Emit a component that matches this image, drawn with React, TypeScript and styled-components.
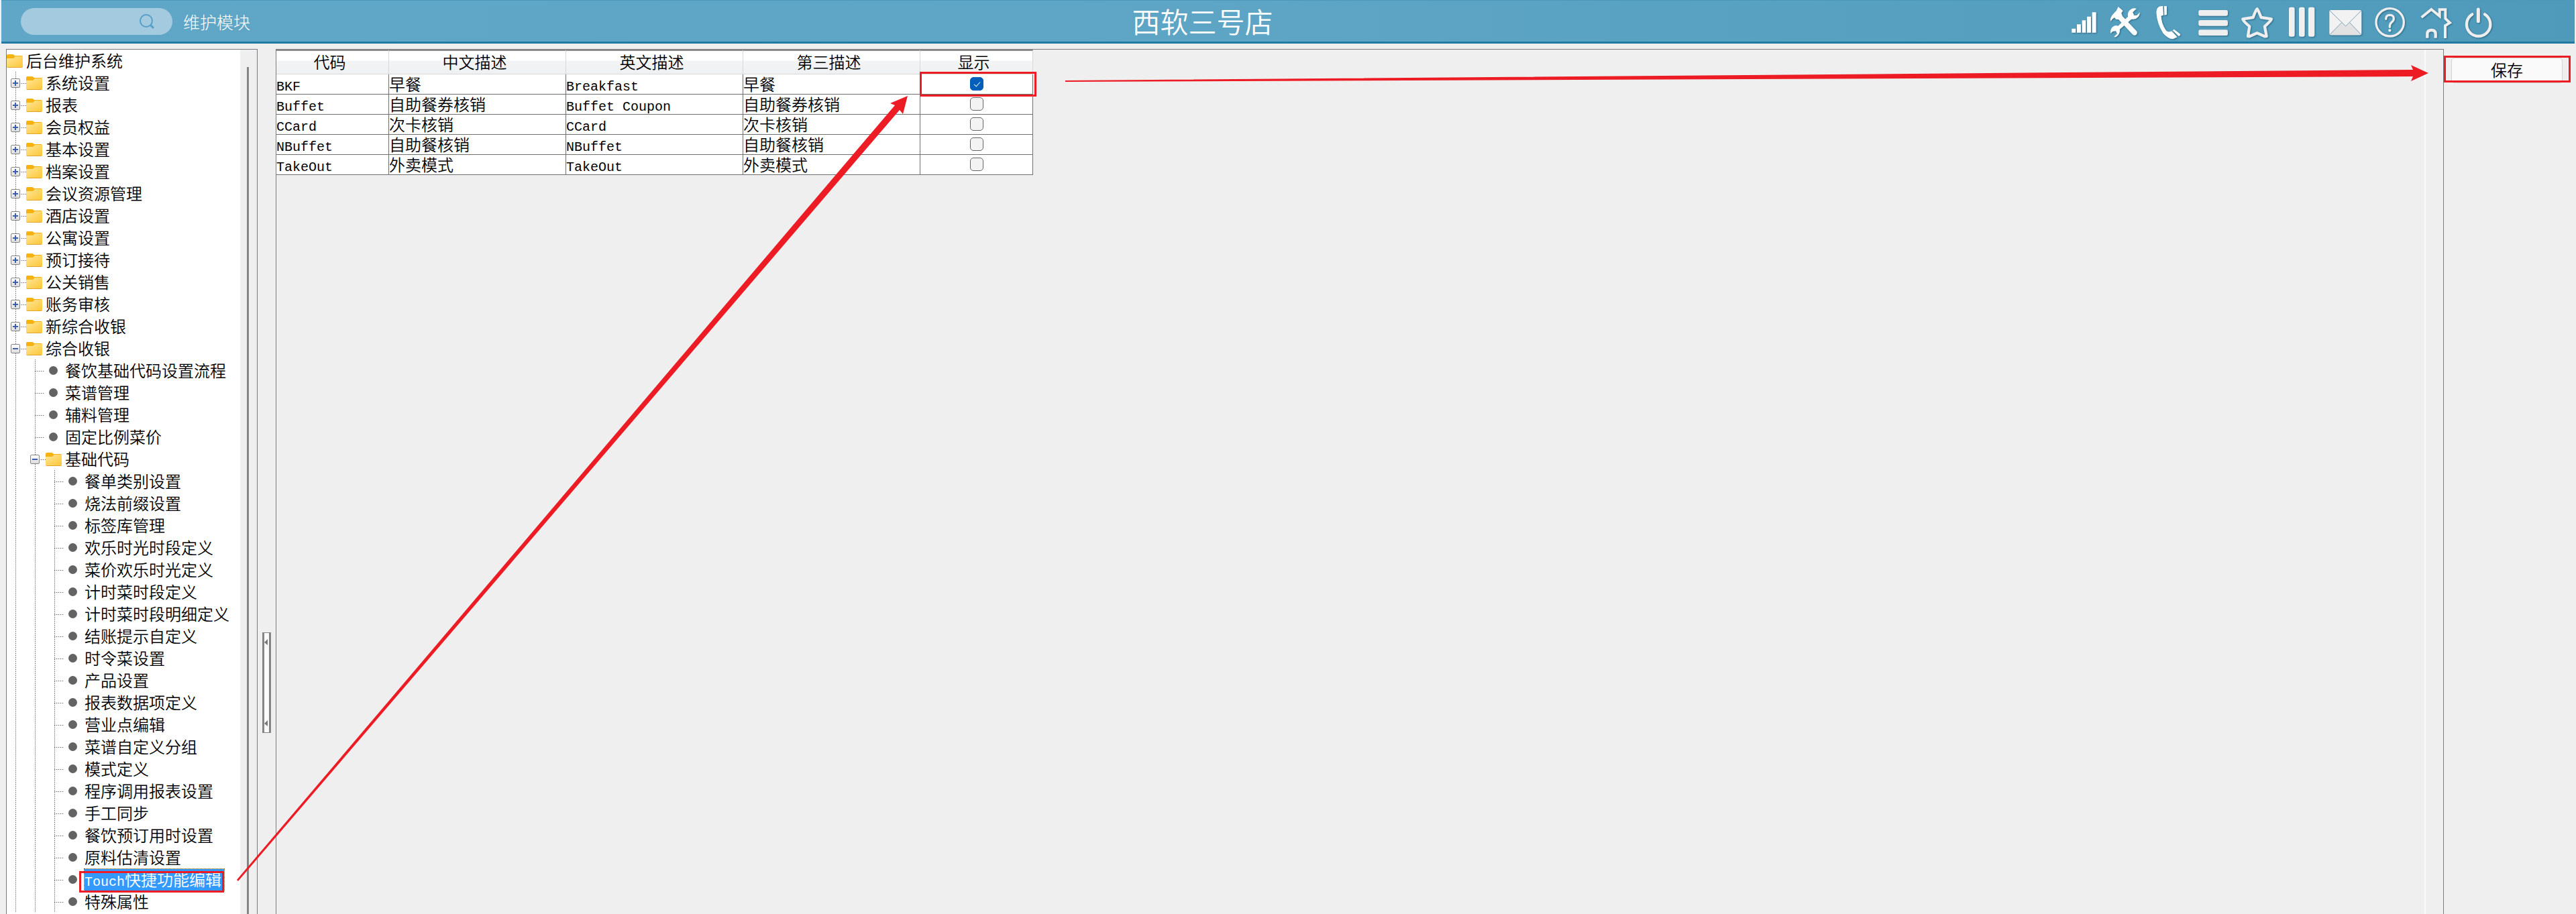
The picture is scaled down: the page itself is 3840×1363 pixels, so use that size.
import React, { useState } from "react";
import styled, { createGlobalStyle, css } from "styled-components";

const RED = "#ed1c24";
const CJK = `"Noto Sans CJK SC", sans-serif`;

const GlobalStyle = createGlobalStyle`
  *, *::before, *::after { box-sizing: border-box; }
  body {
    margin: 0;
    background: #efefef;
    color: #000;
    font-family: ${CJK};
    font-size: 24px;
    font-weight: 350;
    overflow: hidden;
  }
  button, input { font: inherit; color: inherit; }
`;

const Page = styled.div`
  position: relative;
  display: flex;
  flex-direction: column;
  min-height: 100vh;
`;

const TopBar = styled.header`
  display: grid;
  grid-template-columns: 510px 1fr auto;
  align-items: center;
  height: 65px;
  margin: 0 2px;
  padding-right: 105px;
  color: #fff;
  background: linear-gradient(90deg, #60a6c6, #5ea5c5 50%, #4f9aba);
  border-top: 1px solid #4c98ba;
  border-bottom: 3px solid #217aa2;
`;

const TopLeft = styled.div`
  display: flex;
  align-items: center;
  gap: 16px;
  padding-left: 29px;
`;

const SearchBox = styled.label`
  display: flex;
  align-items: center;
  width: 226px;
  height: 40px;
  padding: 0 26px 0 20px;
  border-radius: 20px;
  background: #a4cae0;
`;

const SearchInput = styled.input`
  flex: 1;
  min-width: 0;
  border: 0;
  outline: 0;
  background: transparent;
`;

const ModuleName = styled.span`
  font-size: 25px;
  font-weight: 300;
  line-height: 32px;
`;

const HotelName = styled.h1`
  margin: 0;
  padding-bottom: 2px;
  font-size: 42px;
  line-height: 56px;
  font-weight: 350;
  text-align: center;
`;

const IconBar = styled.nav`
  display: flex;
`;

const IconButton = styled.button`
  display: block;
  padding: 0;
  border: 0;
  background: none;
  svg {
    display: block;
    filter: drop-shadow(1px 1px 1px rgba(20, 70, 95, 0.6));
  }
`;

const Workspace = styled.main`
  display: flex;
  flex: 1;
  padding: 8px 0 0 9px;
`;

const TreePanel = styled.aside`
  display: flex;
  width: 375px;
  border: 1px solid #757b81;
  border-bottom: 0;
  background: #fff;
`;

const TreeArea = styled.div`
  flex: 1;
`;

const TreeScroll = styled.div`
  width: 25px;
  padding: 26px 0 0 10px;
  background: #efefef;
`;

const TreeThumb = styled.div`
  width: 3px;
  height: 100%;
  background: #858585;
`;

const Branch = styled.ul<{ $depth: number }>`
  list-style: none;
  margin: 0;
  padding: 0 0 0 ${(p) => (p.$depth > 1 ? 29 : 0)}px;
  ${(p) =>
    p.$depth > 0 &&
    css`
      background: repeating-linear-gradient(#666 0 1px, #ddd 1px 3px)
        ${p.$depth > 1 ? 42 : 13}px 0 / 1px 100% no-repeat;
    `}
`;

const Row = styled.div`
  display: flex;
  align-items: center;
  height: 33px;
  line-height: 32px;
  white-space: nowrap;
`;

const Joint = styled.span<{ $leaf?: boolean }>`
  display: flex;
  width: 29px;
  height: 14px;
  padding-left: 6px;
  background: repeating-linear-gradient(90deg, #666 0 1px, #ddd 1px 3px)
    13px 7px / ${(p) => (p.$leaf ? 14 : 16)}px 1px no-repeat;
`;

const Toggle = styled.button<{ $open: boolean }>`
  width: 14px;
  height: 14px;
  padding: 0;
  border: 1px solid #858585;
  border-radius: 2px;
  background: linear-gradient(#3f5fae, #3f5fae) center / 8px 2px no-repeat,
    ${(p) => (p.$open ? "" : "linear-gradient(#3f5fae, #3f5fae) center / 2px 8px no-repeat,")}
    linear-gradient(#fff, #dcdcdc);
`;

const Glyph = styled.span<{ $leaf?: boolean }>`
  display: flex;
  justify-content: center;
  width: ${(p) => (p.$leaf ? 22 : 24)}px;
  margin-right: ${(p) => (p.$leaf ? 7 : 5)}px;
`;

const Bullet = styled.span`
  width: 13px;
  height: 13px;
  border-radius: 50%;
  background: #636363;
`;

const NodeLabel = styled.span<{ $selected?: boolean }>`
  position: relative;
  padding-bottom: 2px;
  line-height: 30px;
  ${(p) =>
    p.$selected &&
    css`
      padding-right: 4px;
      color: #fff;
      background: #3399ff;
      outline: 1px dotted #6b4a1e;
    `}
`;

const Latin = styled.span`
  font-family: "Liberation Mono", monospace;
  font-size: 20px;
  line-height: 14px;
  font-weight: 400;
`;

const Mark = styled.span<{ $inset: string }>`
  position: absolute;
  inset: ${(p) => p.$inset};
  border: 3px solid ${RED};
  pointer-events: none;
`;

const Splitter = styled.div`
  display: flex;
  align-items: flex-start;
  justify-content: center;
  width: 27px;
  padding-top: 870px;
`;

const SplitHandle = styled.div`
  display: flex;
  flex-direction: column;
  justify-content: space-between;
  width: 13px;
  height: 150px;
  padding: 9px 0;
  border: 1px solid #858585;
  border-width: 1px 3px;
  background: #fafafa;
`;

const GridPanel = styled.section`
  display: flex;
  flex: 1;
  justify-content: space-between;
  align-items: stretch;
  border: 1px solid #7d7d7d;
  border-width: 1px 1px 0;
`;

const Gutter = styled.div`
  width: 28px;
  border-left: 2px solid #fbfbfb;
`;

const Table = styled.table`
  align-self: flex-start;
  table-layout: fixed;
  width: 1128px;
  border-collapse: separate;
  border-spacing: 0;
  background: #fff;
`;

const Col = styled.col<{ $w: number }>`
  width: ${(p) => p.$w}px;
`;

const Th = styled.th`
  height: 37px;
  padding: 0 8px 2px 0;
  font-weight: 350;
  line-height: 30px;
  border-top: 2px solid #8d8d8d;
  border-right: 1px solid #d8d8d8;
  border-bottom: 1px solid #d8d8d8;
  background: linear-gradient(#fff 0 40%, #f3f4f5 45%, #eef0f2);
`;

const Td = styled.td<{ $center?: boolean }>`
  position: relative;
  height: 30px;
  padding: 0 0 2px;
  line-height: 26px;
  white-space: nowrap;
  text-align: ${(p) => (p.$center ? "center" : "left")};
  border-right: 1px solid #707070;
  border-bottom: 1px solid #707070;
`;

const Check = styled.input`
  appearance: none;
  display: block;
  position: relative;
  width: 20px;
  height: 20px;
  margin: 0 auto;
  border: 1px solid #666;
  border-radius: 5px;
  background: #f3f3f3;
  &:checked {
    border-color: #005fb8;
    background: #005fb8;
  }
  &:checked::after {
    content: "";
    position: absolute;
    left: 7px;
    top: 4px;
    width: 5px;
    height: 9px;
    border: solid #e6f0fa;
    border-width: 0 1px 1px 0;
    transform: rotate(42deg);
  }
`;

const Side = styled.aside`
  width: 197px;
  padding: 13px 20px 0 11px;
`;

const SaveFrame = styled.div`
  position: relative;
`;

const SaveButton = styled.button`
  display: block;
  width: 100%;
  height: 38px;
  padding: 0 0 3px;
  line-height: 32px;
  border: 1px solid #d3d3d3;
  border-radius: 5px;
  background: #fafafa;
`;

const Arrows = styled.svg`
  position: absolute;
  inset: 0;
  width: 100%;
  height: 100%;
  pointer-events: none;
`;

type Node = { label: string; latin?: string; open?: boolean; selected?: boolean; children?: Node[] };

const folder = (label: string): Node => ({ label, children: [] });
const leaf = (label: string): Node => ({ label });

const TREE: Node[] = [
  ..."系统设置,报表,会员权益,基本设置,档案设置,会议资源管理,酒店设置,公寓设置,预订接待,公关销售,账务审核,新综合收银"
    .split(",")
    .map(folder),
  {
    label: "综合收银",
    open: true,
    children: [
      ..."餐饮基础代码设置流程,菜谱管理,辅料管理,固定比例菜价".split(",").map(leaf),
      {
        label: "基础代码",
        open: true,
        children: [
          ..."餐单类别设置,烧法前缀设置,标签库管理,欢乐时光时段定义,菜价欢乐时光定义,计时菜时段定义,计时菜时段明细定义,结账提示自定义,时令菜设置,产品设置,报表数据项定义,营业点编辑,菜谱自定义分组,模式定义,程序调用报表设置,手工同步,餐饮预订用时设置,原料估清设置"
            .split(",")
            .map(leaf),
          { latin: "Touch", label: "快捷功能编辑", selected: true },
          leaf("特殊属性"),
        ],
      },
    ],
  },
];

const ROWS = [
  { code: "BKF", zh: "早餐", en: "Breakfast", third: "早餐", shown: true },
  { code: "Buffet", zh: "自助餐券核销", en: "Buffet Coupon", third: "自助餐券核销", shown: false },
  { code: "CCard", zh: "次卡核销", en: "CCard", third: "次卡核销", shown: false },
  { code: "NBuffet", zh: "自助餐核销", en: "NBuffet", third: "自助餐核销", shown: false },
  { code: "TakeOut", zh: "外卖模式", en: "TakeOut", third: "外卖模式", shown: false },
];

const FolderIcon = () => (
  <svg width="24" height="20" viewBox="0 0 24 20">
    <defs>
      <linearGradient id="folder" x1="0" y1="0" x2="1" y2="1">
        <stop offset="0" stopColor="#ffe79a" />
        <stop offset="1" stopColor="#fdc637" />
      </linearGradient>
    </defs>
    <path d="M0 8V2Q0 0 2 0H9Q10 0 12 2H22Q24 2 24 4V8Z" fill="#f5b210" />
    <path d="M0 7Q0 6 1 6H10L13 3H23Q24 3 24 4V18Q24 19 23 19H1Q0 19 0 18Z" fill="url(#folder)" />
    <path d="M0 18Q0 20 2 20H22Q24 20 24 18Q24 19 22 19H2Q0 19 0 18Z" fill="#e3a42c" />
  </svg>
);

function TreeNode({ node, depth }: { node: Node; depth: number }) {
  const [open, setOpen] = useState(!!node.open);
  const isFolder = !!node.children;
  return (
    <li>
      <Row>
        <Joint $leaf={!isFolder}>
          {isFolder && (
            <Toggle type="button" $open={open} aria-expanded={open} aria-label={node.label} onClick={() => setOpen(!open)} />
          )}
        </Joint>
        <Glyph $leaf={!isFolder}>{isFolder ? <FolderIcon /> : <Bullet />}</Glyph>
        <NodeLabel $selected={node.selected}>
          {node.latin && <Latin>{node.latin}</Latin>}
          {node.label}
          {node.selected && <Mark $inset="3px 0 -3px -8px" />}
        </NodeLabel>
      </Row>
      {open && node.children!.length > 0 && (
        <Branch $depth={depth + 1}>
          {node.children!.map((c) => (
            <TreeNode key={c.label} node={c} depth={depth + 1} />
          ))}
        </Branch>
      )}
    </li>
  );
}

const ICONS: { name: string; draw: React.ReactNode }[] = [
  {
    name: "信号",
    draw: (
      <path d="M85 125h18v18h-18zM108 106h18v37h-18zM131 88h17v55h-17zM153 71h18v72h-18zM176 52h18v91h-18z" fill="#fff" />
    ),
  },
  {
    name: "工具",
    draw: (
      <>
        <path
          d="M258 93Q256 76 268 62L285 44L293 27L314 45L307 56L312 70L377 138Q380 154 366 155Q360 155 356 150L294 84L284 84L276 76Q266 80 258 93Z"
          fill="#fff"
        />
        <path
          d="M390 52Q388 80 362 83L352 83L300 128Q302 150 284 161Q278 164 274 161L288 148L282 136L268 138L258 147Q256 122 274 113Q284 109 292 113L336 72Q332 48 350 38Q364 31 375 36L358 52L364 66L376 66Z"
          fill="#fff"
        />
      </>
    ),
  },
  {
    name: "电话",
    draw: (
      <>
        <path
          d="M493 24Q464 22 463 52Q466 105 494 146Q514 170 538 172L557 163L532 136Q515 144 506 132Q486 102 485 69Q487 66 495 65Z"
          fill="#fff"
        />
        <path d="M498 24L510 25V62L499 65ZM536 133L543 128L571 150Q571 157 563 159Z" fill="#fff" />
      </>
    ),
  },
  {
    name: "菜单",
    draw: (
      <g fill="#eee">
        <rect x="652" y="42" width="131" height="26" rx="7" />
        <rect x="652" y="87" width="131" height="26" rx="7" />
        <rect x="652" y="130" width="131" height="26" rx="7" />
      </g>
    ),
  },
  {
    name: "收藏",
    draw: (
      <path
        d="M914 37Q918 40 932 75L978 82Q977 90 948 115L956 159L948 160L914 145L880 160L873 159L880 115Q852 92 850 82L896 75Q908 42 914 37Z"
        fill="none"
        stroke="#eee"
        strokeWidth="13"
        strokeLinejoin="round"
      />
    ),
  },
  {
    name: "分栏",
    draw: (
      <g fill="#f0f0f0">
        <rect x="66" y="29" width="26" height="132" rx="8" />
        <rect x="111" y="29" width="26" height="132" rx="8" />
        <rect x="153" y="29" width="28" height="132" rx="8" />
      </g>
    ),
  },
  {
    name: "邮件",
    draw: (
      <>
        <rect x="247" y="42" width="144" height="112" rx="7" fill="#f2f2f2" />
        <path d="M250 150L302 98L320 114L338 98L388 150Q386 154 382 154H256Q251 154 250 150Z" fill="#e2e2e2" />
        <path d="M249 45L320 114L389 45M250 151L302 98M388 151L338 98" fill="none" stroke="#7fa3b3" strokeWidth="3" />
      </>
    ),
  },
  {
    name: "帮助",
    draw: (
      <g fill="none" stroke="#eee" strokeWidth="10">
        <circle cx="518" cy="97" r="62" />
        <path d="M500 82Q500 64 518 64Q535 65 535 80Q535 90 525 97Q517 103 517 118" strokeLinecap="round" />
        <circle cx="517" cy="133" r="3" strokeWidth="7" />
      </g>
    ),
  },
  {
    name: "主页",
    draw: (
      <g fill="none" stroke="#eee" strokeWidth="12">
        <path d="M659 75L703 39L740 69V40H766V80L786 99L765 112V168" />
        <path d="M685 167V147Q686 132 704 132Q721 132 722 147V167" strokeWidth="13" />
      </g>
    ),
  },
  {
    name: "退出",
    draw: (
      <g fill="none" stroke="#eee" strokeWidth="13" strokeLinecap="round">
        <path d="M886 61A53 53 0 1 0 942 61" />
        <path d="M913 39V92" strokeWidth="15" />
      </g>
    ),
  },
];

export default function App() {
  const [rows, setRows] = useState(ROWS);
  const toggle = (i: number) => setRows(rows.map((r, k) => (k === i ? { ...r, shown: !r.shown } : r)));
  return (
    <Page>
      <GlobalStyle />
      <TopBar>
        <TopLeft>
          <SearchBox>
            <SearchInput type="text" aria-label="搜索" />
            <svg width="24" height="24" viewBox="0 0 24 24" fill="none" stroke="#559fc6" strokeWidth="2">
              <circle cx="11" cy="11" r="9" />
              <path d="M17 17L22 22" strokeWidth="3" />
            </svg>
          </SearchBox>
          <ModuleName>维护模块</ModuleName>
        </TopLeft>
        <HotelName>西软三号店</HotelName>
        <IconBar>
          {ICONS.map((icon, i) => (
            <IconButton key={icon.name} type="button" aria-label={icon.name}>
              <svg width="66" height="62" viewBox={`${39 + 198 * (i % 5)} 0 198 186`}>
                {icon.draw}
              </svg>
            </IconButton>
          ))}
        </IconBar>
      </TopBar>

      <Workspace>
        <TreePanel>
          <TreeArea>
            <Branch $depth={0}>
              <li>
                <Row>
                  <Glyph>
                    <FolderIcon />
                  </Glyph>
                  <NodeLabel>后台维护系统</NodeLabel>
                </Row>
                <Branch $depth={1}>
                  {TREE.map((n) => (
                    <TreeNode key={n.label} node={n} depth={1} />
                  ))}
                </Branch>
              </li>
            </Branch>
          </TreeArea>
          <TreeScroll>
            <TreeThumb />
          </TreeScroll>
        </TreePanel>

        <Splitter>
          <SplitHandle>
            <svg width="7" height="9" viewBox="0 0 7 9">
              <path d="M5 0V9L0 5Z" fill="#777" />
            </svg>
            <svg width="7" height="9" viewBox="0 0 7 9">
              <path d="M5 0V9L0 5Z" fill="#777" />
            </svg>
          </SplitHandle>
        </Splitter>

        <GridPanel>
          <Table>
            <colgroup>
              {[168, 264, 264, 264, 168].map((w, i) => (
                <Col key={i} $w={w} />
              ))}
            </colgroup>
            <thead>
              <tr>
                {["代码", "中文描述", "英文描述", "第三描述", "显示"].map((h) => (
                  <Th key={h} scope="col">
                    {h}
                  </Th>
                ))}
              </tr>
            </thead>
            <tbody>
              {rows.map((r, i) => (
                <tr key={r.code}>
                  <Td>
                    <Latin>{r.code}</Latin>
                  </Td>
                  <Td>{r.zh}</Td>
                  <Td>
                    <Latin>{r.en}</Latin>
                  </Td>
                  <Td>{r.third}</Td>
                  <Td $center>
                    <Check type="checkbox" aria-label={`显示 ${r.code}`} checked={r.shown} onChange={() => toggle(i)} />
                    {i === 0 && <Mark $inset="-4px -6px -4px -1px" />}
                  </Td>
                </tr>
              ))}
            </tbody>
          </Table>
          <Gutter />
        </GridPanel>

        <Side>
          <SaveFrame>
            <SaveButton type="button">保存</SaveButton>
            <Mark $inset="-3px -12px 1px -11px" />
          </SaveFrame>
        </Side>
      </Workspace>

      <Arrows aria-hidden="true" fill={RED}>
        <polygon points="353,1312 1334,157 1327,154 1353,143 1346,170 1341,164 355,1314" />
        <polygon points="1588,120 3597,104 3594,97 3620,109 3594,121 3597,114 1588,122" />
      </Arrows>
    </Page>
  );
}
